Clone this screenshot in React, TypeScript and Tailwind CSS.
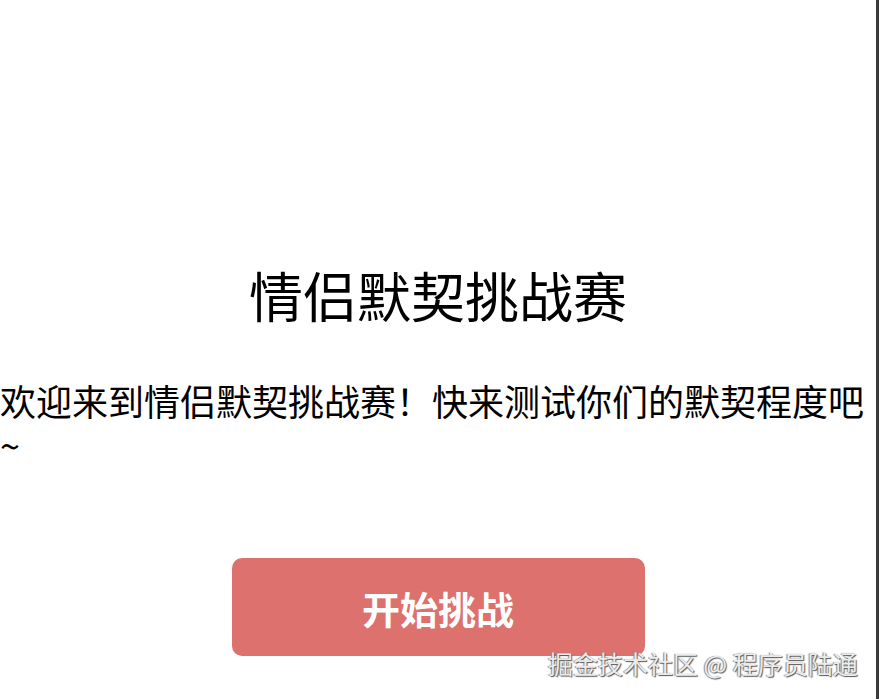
export default function App() {
  return (
    <div className="relative h-[699px] w-[879px] overflow-hidden bg-white font-['Noto_Sans_CJK_SC',sans-serif] text-black">
      <div className="flex h-full w-[876px] flex-col items-center border-r-[3px] border-[#3a3a3a] box-content">
        {/* Title */}
        <h1 className="mt-[268px] text-[54px] font-normal leading-[54px]">情侣默契挑战赛</h1>

        {/* Intro */}
        <p className="mt-[56px] w-full text-left text-[36px] leading-[44px]">
          欢迎来到情侣默契挑战赛！快来测试你们的默契程度吧~
        </p>

        <button className="mt-[92px] flex h-[98px] w-[413px] items-center justify-center rounded-[10px] bg-[#dc716e] text-[38px] font-bold text-white">
          开始挑战
        </button>
      </div>

      {/* Watermark */}
      <div className="absolute left-[548px] top-[648px] whitespace-nowrap text-[25px] leading-[30px] text-[#ececec] [text-shadow:1px_1px_1px_#555,-1px_0_1px_#888]">
        掘金技术社区 @ 程序员陆通
      </div>
    </div>
  );
}
